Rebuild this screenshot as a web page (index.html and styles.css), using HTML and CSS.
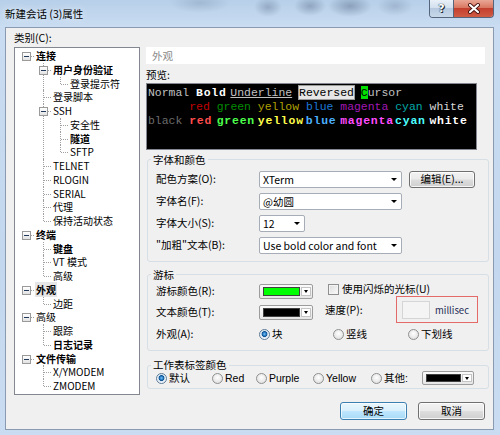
FILE: index.html
```html
<!DOCTYPE html>
<html lang="zh-CN">
<head>
<meta charset="utf-8">
<title>新建会话 (3)属性</title>
<link rel="stylesheet" href="styles.css">
</head>
<body>
<div class="window">
  <div class="titlebar">
    <span class="title">新建会话 (3)属性</span>
    <div class="caption">
      <span class="cbtn help">?</span>
      <span class="cbtn close"><svg width="14" height="11" viewBox="0 0 14 11"><path d="M3 2 L11 9 M11 2 L3 9" stroke="#4a1410" stroke-width="4" stroke-linecap="round"/><path d="M3 2 L11 9 M11 2 L3 9" stroke="#ffffff" stroke-width="2.2" stroke-linecap="round"/></svg></span>
    </div>
  </div>
  <div class="client">
    <div class="left">
      <div class="cat-label">类别(C):</div>
      <div class="tree">
        <ul class="root">
          <li><div class="row"><i class="exp"></i><span class="t b">连接</span></div>
            <ul>
              <li><div class="row"><i class="exp"></i><span class="t b">用户身份验证</span></div>
                <ul>
                  <li><div class="row"><span class="t">登录提示符</span></div></li>
                </ul>
              </li>
              <li><div class="row"><span class="t">登录脚本</span></div></li>
              <li><div class="row"><i class="exp"></i><span class="t">SSH</span></div>
                <ul>
                  <li><div class="row"><span class="t">安全性</span></div></li>
                  <li><div class="row"><span class="t b">隧道</span></div></li>
                  <li><div class="row"><span class="t">SFTP</span></div></li>
                </ul>
              </li>
              <li><div class="row"><span class="t">TELNET</span></div></li>
              <li><div class="row"><span class="t">RLOGIN</span></div></li>
              <li><div class="row"><span class="t">SERIAL</span></div></li>
              <li><div class="row"><span class="t">代理</span></div></li>
              <li><div class="row"><span class="t">保持活动状态</span></div></li>
            </ul>
          </li>
          <li><div class="row"><i class="exp"></i><span class="t b">终端</span></div>
            <ul>
              <li><div class="row"><span class="t b">键盘</span></div></li>
              <li><div class="row"><span class="t">VT 模式</span></div></li>
              <li><div class="row"><span class="t">高级</span></div></li>
            </ul>
          </li>
          <li><div class="row"><i class="exp"></i><span class="t b sel">外观</span></div>
            <ul>
              <li><div class="row"><span class="t">边距</span></div></li>
            </ul>
          </li>
          <li><div class="row"><i class="exp"></i><span class="t">高级</span></div>
            <ul>
              <li><div class="row"><span class="t">跟踪</span></div></li>
              <li><div class="row"><span class="t b">日志记录</span></div></li>
            </ul>
          </li>
          <li><div class="row"><i class="exp"></i><span class="t b">文件传输</span></div>
            <ul>
              <li><div class="row"><span class="t">X/YMODEM</span></div></li>
              <li><div class="row"><span class="t">ZMODEM</span></div></li>
            </ul>
          </li>
        </ul>
      </div>
    </div>

    <div class="right">
      <div class="page-title">外观</div>
      <div class="preview-label">预览:</div>
      <div class="preview">
        <div class="pline"><span class="n">Normal </span><span class="bd w5 hw">Bold</span><span class="n ul">Underline</span> <span class="rev">Reversed</span> <span class="cur">C</span><span class="n">ursor</span></div>
        <div class="pline">      <span class="r">red</span> <span class="gr">green</span> <span class="y">yellow</span> <span class="bl">blue</span> <span class="m">magenta</span> <span class="c">cyan</span> <span class="w">white</span></div>
        <div class="pline"><span class="k">black </span><span class="bd w4 hr">red</span><span class="bd w6 hg">green</span><span class="bd w7 hy">yellow</span><span class="bd w5 hb">blue</span><span class="bd w8 hm">magenta</span><span class="bd w5 hc">cyan</span><span class="bd hw">white</span></div>
      </div>

      <fieldset class="group g1">
        <legend>字体和颜色</legend>
        <div class="form1">
          <span class="lbl">配色方案(O):</span>
          <span class="combo wide"><span class="val">XTerm</span><i class="arrow"></i></span>
          <span class="btn edit">编辑(E)...</span>
          <span class="lbl">字体名(F):</span>
          <span class="combo wide"><span class="val">@幼圆</span><i class="arrow"></i></span>
          <span></span>
          <span class="lbl">字体大小(S):</span>
          <span class="combo small"><span class="val">12</span><i class="arrow"></i></span>
          <span></span>
          <span class="lbl">"加粗"文本(B):</span>
          <span class="combo wide"><span class="val">Use bold color and font</span><i class="arrow"></i></span>
          <span></span>
        </div>
      </fieldset>

      <fieldset class="group g2">
        <legend>游标</legend>
        <div class="form2">
          <span class="lbl">游标颜色(R):</span>
          <span class="colorbtn"><i class="swatch green"></i><i class="cdrop"><i class="arrow"></i></i></span>
          <span class="check-item"><i class="checkbox"></i>使用闪烁的光标(U)</span>
          <span class="lbl">文本颜色(T):</span>
          <span class="colorbtn"><i class="swatch black"></i><i class="cdrop"><i class="arrow"></i></i></span>
          <span class="speed"><span class="speed-label">速度(P):</span><span class="annot"><i class="editbox"></i><span class="unit">millisec</span></span></span>
          <span class="lbl">外观(A):</span>
          <span class="radios">
            <span class="ritem w74"><i class="radio on"></i>块</span>
            <span class="ritem w75"><i class="radio"></i>竖线</span>
            <span class="ritem"><i class="radio"></i>下划线</span>
          </span>
        </div>
      </fieldset>

      <fieldset class="group g3">
        <legend class="tight">工作表标签颜色</legend>
        <div class="form3">
          <span class="ritem w56 tight"><i class="radio on"></i>默认</span>
          <span class="ritem w44 tight"><i class="radio"></i>Red</span>
          <span class="ritem w57 tight"><i class="radio"></i>Purple</span>
          <span class="ritem w58 tight"><i class="radio"></i>Yellow</span>
          <span class="ritem w51 tight"><i class="radio"></i>其他:</span>
          <span class="colorbtn other"><i class="swatch black"></i><i class="cdrop"><i class="arrow"></i></i></span>
        </div>
      </fieldset>

      <div class="buttons">
        <span class="btn dlg default">确定</span>
        <span class="btn dlg">取消</span>
      </div>
    </div>
  </div>
</div>
</body>
</html>
```

FILE: styles.css
```css
* { box-sizing: border-box; }
html, body { margin: 0; padding: 0; }
body {
  width: 500px;
  height: 435px;
  overflow: hidden;
  font-family: "Noto Sans CJK SC", "Noto Sans", sans-serif;
  font-size: 10.5px;
  line-height: 12px;
  color: #000;
  background: #c4d8ee;
}
i { font-style: normal; display: inline-block; }

/* ---------- window frame ---------- */
.window {
  width: 500px;
  height: 435px;
  display: flex;
  flex-direction: column;
  padding: 0 6px 5px 5px;
  background:
    radial-gradient(ellipse 30px 10px at 200px 3px, rgba(110,130,160,0.30), transparent),
    radial-gradient(ellipse 14px 10px at 268px 7px, rgba(90,110,140,0.40), transparent),
    radial-gradient(ellipse 16px 10px at 310px 6px, rgba(90,110,140,0.45), transparent),
    radial-gradient(ellipse 22px 11px at 350px 6px, rgba(80,100,130,0.45), transparent),
    radial-gradient(ellipse 18px 10px at 395px 6px, rgba(110,130,160,0.35), transparent),
    linear-gradient(180deg, #b7cfe9 0px, #c9dcf1 26px, #c3d7ee 60%, #c9dcf1 100%);
}
.titlebar {
  height: 27px;
  flex: none;
  display: flex;
  align-items: flex-start;
}
.title {
  line-height: 27px;
  font-size: 10.5px;
  color: #000;
  text-shadow: 0 0 6px rgba(255,255,255,0.9);
}
.caption {
  margin-left: auto;
  display: flex;
  height: 18px;
  border: 1px solid #55657c;
  border-top: none;
  border-radius: 0 0 4px 4px;
  overflow: hidden;
}
.cbtn {
  display: flex;
  align-items: center;
  justify-content: center;
  height: 17px;
}
.help {
  width: 24px;
  border-right: 1px solid #55657c;
  background: linear-gradient(180deg, #e9f0f8 0%, #d3e0ee 45%, #b6c9df 50%, #c8d8ea 100%);
  color: #fff;
  font-family: "DejaVu Sans", sans-serif;
  font-weight: bold;
  font-size: 11px;
  text-shadow: 0 0 1px #1d2a3a, 0 0 1px #1d2a3a, 1px 1px 0 #1d2a3a;
}
.close {
  width: 39px;
  background: linear-gradient(180deg, #e9a795 0%, #d97862 45%, #c4402e 50%, #cf5c44 100%);
}

/* ---------- client ---------- */
.client {
  flex: 1;
  background: #f0f0f0;
  border: 1px solid #8a9bb1;
  display: flex;
  gap: 6px;
  padding: 4px 0 0 8px;
}
.left {
  width: 126px;
  display: flex;
  flex-direction: column;
}
.cat-label { height: 12px; line-height: 12px; }

/* ---------- tree ---------- */
.tree {
  margin-top: 3px;
  height: 348px;
  border: 1px solid #828790;
  background: #fff;
  padding-top: 1px;
  overflow: hidden;
}
.tree ul { list-style: none; margin: 0; padding: 0 0 0 17px; }
.tree ul.root { padding-left: 11px; }
.tree li { position: relative; }
.tree .row {
  position: relative;
  height: 13.75px;
  line-height: 13.75px;
  padding-left: 10px;
  white-space: nowrap;
  font-size: 10px;
}
.tree .row::before {
  content: "";
  position: absolute;
  left: 1px;
  top: 7px;
  width: 7px;
  border-top: 1px dotted #a0a0a0;
}
.tree ul ul > li::after {
  content: "";
  position: absolute;
  left: 0;
  top: 0;
  bottom: 0;
  border-left: 1px dotted #a0a0a0;
}
.tree ul ul > li:last-child::after { bottom: auto; height: 7px; }
.tree .exp {
  position: absolute;
  left: -4px;
  top: 3px;
  width: 9px;
  height: 9px;
  border: 1px solid #9a9a9a;
  background: linear-gradient(180deg, #ffffff, #e2e2e2);
  z-index: 1;
}
.tree .exp::after {
  content: "";
  position: absolute;
  left: 1px;
  top: 3px;
  width: 5px;
  height: 1px;
  background: #21395a;
}
.t.b { font-weight: bold; }
.t.sel { background: #e6e6e6; padding: 0 1px; margin-left: -1px; }

/* ---------- right ---------- */
.right {
  width: 343px;
  padding-top: 15px;
  display: flex;
  flex-direction: column;
}
.page-title {
  height: 17px;
  width: 339px;
  background: #fff;
  padding-left: 6px;
  line-height: 17px;
  color: #8a8a8a;
}
.preview-label { margin-top: 5px; height: 12px; line-height: 12px; }
.preview {
  margin-top: 2px;
  width: 331px;
  height: 67px;
  background: #000;
  border: 1px solid #828790;
  padding: 2px 0 0 1px;
  font-family: "Liberation Mono", "DejaVu Sans Mono", monospace;
  font-size: 11.45px;
}
.pline { white-space: pre; height: 14px; line-height: 14px; }
.n { color: #c0c0c0; }
.ul { text-decoration: underline; }
.rev { background: #e6e6e6; color: #000; box-shadow: 0 0 0 1px #9a9a9a; }
.cur { background: #00e000; color: #000; }
.bd { display: inline-block; font-weight: bold; letter-spacing: 0.8px; }
.w4 { width: 4ch; } .w5 { width: 5ch; } .w6 { width: 6ch; } .w7 { width: 7ch; } .w8 { width: 8ch; }
.r { color: #c40000; }
.gr { color: #008c00; }
.y { color: #b0a000; }
.bl { color: #1c78d8; }
.m { color: #a418b4; }
.c { color: #00a8a8; }
.w { color: #d8d8d8; }
.k { color: #6c6c6c; }
.hr { color: #ff4c4c; }
.hg { color: #4cff4c; }
.hy { color: #ffff4c; }
.hb { color: #4cb0ff; }
.hm { color: #ff4cff; }
.hc { color: #4cffff; }
.hw { color: #ffffff; }

/* ---------- group boxes ---------- */
.group {
  margin: 0 0 0 1px;
  border: 1px solid #d5dfe5;
  border-radius: 3px;
  min-width: 0;
}
.group legend {
  padding: 0 2px;
  margin-left: -5px;
  line-height: 13px;
  height: 13px;
}
.tight { font-family: "Liberation Sans", "Noto Sans CJK SC", sans-serif; }
.g1 { margin-top: 3px; padding: 2px 0 5px 8px; }
.g2 { margin-top: 6px; padding: 0 0 5px 8px; }
.g3 { margin-top: 8px; padding: 0 0 4px 8px; }

.lbl { white-space: nowrap; }
.form1 {
  display: grid;
  grid-template-columns: 103px 143px auto;
  grid-template-rows: repeat(4, 22px);
  align-items: center;
}
.combo {
  display: flex;
  align-items: center;
  height: 17px;
  border: 1px solid #a7adb6;
  border-radius: 2px;
  background: #fff;
  padding-left: 3px;
}
.combo.wide { width: 143px; }
.combo.small { width: 46px; }
.combo .val { line-height: 15px; white-space: nowrap; }
.arrow {
  width: 0;
  height: 0;
  border-left: 3px solid transparent;
  border-right: 3px solid transparent;
  border-top: 3px solid #000;
}
.combo .arrow { margin-left: auto; margin-right: 4px; }

.btn {
  display: flex;
  align-items: center;
  justify-content: center;
  border: 1px solid #707070;
  border-radius: 3px;
  background: linear-gradient(180deg, #f2f2f2 0%, #ebebeb 48%, #dddddd 52%, #cfcfcf 100%);
  box-shadow: inset 0 0 0 1px rgba(255,255,255,0.8);
  white-space: nowrap;
}
.btn.edit { width: 66px; height: 17px; margin-left: 7px; }

/* group 2 */
.form2 {
  display: grid;
  grid-template-columns: 103px 54px 1fr;
  grid-template-rows: 20px 22px 22px;
  align-items: center;
}
.colorbtn {
  display: flex;
  width: 54px;
  height: 15px;
  border: 1px solid #9c9c9c;
  border-radius: 2px;
  background: linear-gradient(180deg, #fafafa, #e6e6e6);
  padding: 2px 1px 2px 3px;
  gap: 1px;
}
.swatch { flex: 1; border: 1px solid #404040; }
.swatch.green { background: #00ff00; }
.swatch.black { background: #000; }
.cdrop {
  width: 10px;
  display: flex;
  align-items: center;
  justify-content: center;
  border: 1px solid #c4c4c4;
  background: #fff;
}
.cdrop .arrow { border-left-width: 2px; border-right-width: 2px; border-top-width: 3px; }

.check-item {
  display: flex;
  align-items: center;
  gap: 3px;
  margin-left: 15px;
  white-space: nowrap;
  align-self: start;
  margin-top: 2px;
}
.checkbox {
  width: 11px;
  height: 11px;
  border: 1px solid #8f8f8f;
  background: linear-gradient(135deg, #dcdcdc, #fbfbfb);
  box-shadow: inset 0 0 0 1px #f4f4f4;
}
.speed {
  display: flex;
  align-items: center;
  margin-left: 12px;
  margin-top: -5px;
}
.speed-label { width: 71px; white-space: nowrap; }
.annot {
  display: flex;
  align-items: center;
  border: 1px solid #e46a6a;
  padding: 4px 8px 3px 5px;
}
.editbox {
  width: 28px;
  height: 18px;
  border: 1px solid #d5d5d5;
  background: #f4f4f4;
}
.unit {
  margin-left: 5px;
  font-size: 9.5px;
  color: #1f2a55;
  white-space: nowrap;
}
.radios {
  grid-column: 2 / span 2;
  display: flex;
  align-items: center;
}
.ritem {
  display: flex;
  align-items: center;
  gap: 2px;
  white-space: nowrap;
}
.w74 { width: 74px; } .w75 { width: 75px; }
.w56 { width: 56px; } .w44 { width: 44px; } .w57 { width: 57px; } .w58 { width: 58px; } .w51 { width: 51px; }
.radio {
  width: 11px;
  height: 11px;
  border-radius: 50%;
  border: 1px solid #8e8f8f;
  background: radial-gradient(circle at 50% 40%, #ffffff 0, #e4e4e4 70%, #d4d4d4 100%);
}
.radio.on {
  border-color: #5d7a95;
  background: radial-gradient(circle at 50% 45%, #7cc4f5 0, #2a7fc8 1.6px, #0e4f8c 2.6px, #cfe2f2 3.2px, #f4f8fb 4.5px);
}

/* group 3 */
.form3 {
  display: flex;
  align-items: center;
  height: 12px;
}
.colorbtn.other { width: 52px; height: 14px; }

/* buttons */
.buttons {
  margin-top: 13px;
  display: flex;
  justify-content: flex-end;
  gap: 11px;
  padding-right: 4px;
}
.btn.dlg { width: 67px; height: 18px; }
.btn.default {
  border-color: #3c7fb1;
  background: linear-gradient(180deg, #eaf6fd 0%, #d9f0fc 48%, #bee6fd 52%, #a7d9f5 100%);
  box-shadow: inset 0 0 0 1px rgba(255,255,255,0.7);
}
```
